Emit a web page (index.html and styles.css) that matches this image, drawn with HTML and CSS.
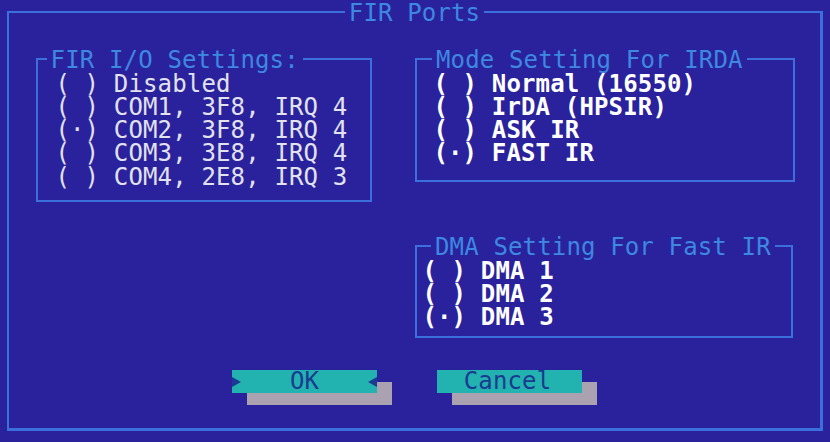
FILE: index.html
```html
<!DOCTYPE html>
<html>
<head>
<meta charset="utf-8">
<title>FIR Ports</title>
<link rel="stylesheet" href="styles.css">
</head>
<body>
<div class="screen">
  <div class="frame">
    <div class="frame-title"><span>FIR Ports</span></div>
    <div class="panels">
      <div class="box box-io">
        <div class="box-title"><span>FIR I/O Settings:</span></div>
        <div class="opt">( ) Disabled</div>
        <div class="opt">( ) COM1, 3F8, IRQ 4</div>
        <div class="opt">(·) COM2, 3F8, IRQ 4</div>
        <div class="opt">( ) COM3, 3E8, IRQ 4</div>
        <div class="opt">( ) COM4, 2E8, IRQ 3</div>
      </div>
      <div class="col">
        <div class="box box-mode">
          <div class="box-title"><span>Mode Setting For IRDA</span></div>
          <div class="opt bold">( ) Normal (16550)</div>
          <div class="opt bold">( ) IrDA (HPSIR)</div>
          <div class="opt bold">( ) ASK IR</div>
          <div class="opt bold">(·) FAST IR</div>
        </div>
        <div class="box box-dma">
          <div class="box-title"><span>DMA Setting For Fast IR</span></div>
          <div class="opt bold">( ) DMA 1</div>
          <div class="opt bold">( ) DMA 2</div>
          <div class="opt bold">(·) DMA 3</div>
        </div>
      </div>
    </div>
    <div class="buttons">
      <div class="btn btn-ok">
        <svg class="tri" width="9" height="10" viewBox="0 0 9 10"><polygon points="0,0 9,5 0,10" fill="#1b3a92"/></svg>
        <span class="btn-label">OK</span>
        <svg class="tri" width="9" height="10" viewBox="0 0 9 10"><polygon points="9,0 0,5 9,10" fill="#1b3a92"/></svg>
      </div>
      <div class="btn btn-cancel"><span class="btn-label">Cancel</span></div>
    </div>
  </div>
</div>
</body>
</html>
```

FILE: styles.css
```css
html, body {
  margin: 0;
  padding: 0;
  background: #2a229c;
}

body {
  width: 830px;
  height: 442px;
  overflow: hidden;
  font-family: "DejaVu Sans Mono", "Liberation Mono", monospace;
  font-size: 24px;
  line-height: 23.25px;
  letter-spacing: 0.15px;
  color: #e2e2ee;
}

.screen {
  padding: 11px 0 0 7px;
}

.frame {
  box-sizing: border-box;
  width: 816px;
  height: 420px;
  border: 2px solid #3b6fdc;
  border-right-width: 3px;
  border-bottom-width: 3px;
}

.frame-title {
  margin-top: -10.65px;
  height: 23.25px;
  text-align: center;
}

.frame-title span,
.box-title span {
  display: inline-block;
  background: #2a229c;
  color: #3d88e0;
  padding: 0 4px;
  white-space: pre;
}

.panels {
  display: flex;
  align-items: flex-start;
  gap: 43px;
  margin-top: 32.4px;
  padding-left: 27px;
}

.col {
  display: flex;
  flex-direction: column;
  gap: 63px;
}

.box {
  box-sizing: border-box;
  border: 2px solid #3b6fdc;
}

.box-title {
  margin-top: -10.65px;
  height: 23.25px;
}

.opt {
  white-space: pre;
  height: 23.25px;
}

.bold {
  font-weight: bold;
  color: #ffffff;
}

.box-io {
  width: 336px;
  padding: 0 0 11.15px 17.4px;
}
.box-io .box-title {
  margin-left: -8.8px;
}

.box-mode {
  width: 380px;
  padding: 0 0 14.4px 16.4px;
}
.box-mode .box-title {
  margin-left: -1.4px;
}

.box-dma {
  width: 378px;
  padding: 0 0 6.65px 5.4px;
}
.box-dma .box-title {
  margin-left: 8.6px;
}

.buttons {
  display: flex;
  gap: 60px;
  margin-top: 32px;
  padding-left: 223px;
}

.btn {
  box-sizing: border-box;
  width: 145px;
  height: 23.25px;
  background: #22b2b0;
  box-shadow: 15px 12px 0 #aaa2b0;
  color: #1b3a92;
  display: flex;
  align-items: center;
  justify-content: center;
}

.btn-ok {
  justify-content: space-between;
}

.btn-cancel .btn-label {
  margin-left: -4px;
}

.btn-label {
  white-space: pre;
}

.tri {
  display: block;
  flex: none;
}
```
